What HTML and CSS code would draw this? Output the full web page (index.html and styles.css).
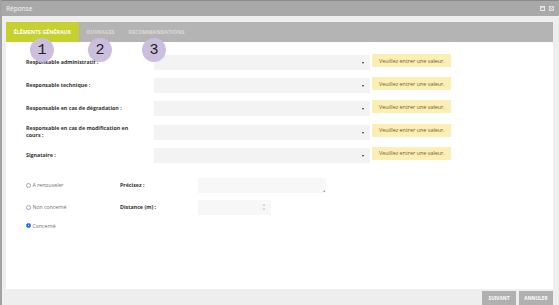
FILE: index.html
```html
<!DOCTYPE html>
<html lang="fr">
<head>
<meta charset="utf-8">
<title>Réponse</title>
<link rel="stylesheet" href="styles.css">
</head>
<body>
<div class="window">
  <div class="titlebar">
    <span class="title">Réponse</span>
    <div class="wbtns">
      <svg width="5" height="5" viewBox="0 0 5 5"><rect x="0.5" y="0.5" width="4" height="4" fill="none" stroke="#e8e8e8" stroke-width="1"/><rect x="0.5" y="0.5" width="4" height="1.2" fill="#e8e8e8"/></svg>
      <svg width="5" height="5" viewBox="0 0 5 5"><rect x="0.5" y="0.5" width="4" height="4" fill="none" stroke="#e8e8e8" stroke-width="0.8"/><path d="M1.2 1.2 L3.8 3.8 M3.8 1.2 L1.2 3.8" stroke="#e8e8e8" stroke-width="0.9"/></svg>
    </div>
  </div>
  <div class="body">
    <div class="tabs">
      <div class="tab active">ÉLÉMENTS GÉNÉRAUX</div>
      <div class="tab">OUVRAGES</div>
      <div class="tab">RECOMMANDATIONS</div>
    </div>
    <div class="panel">
      <div class="fields">
        <label class="lbl">Responsable administratif :</label>
        <div class="select"><span class="caret"></span></div>
        <div class="msg">Veuillez entrer une valeur.</div>

        <label class="lbl">Responsable technique :</label>
        <div class="select"><span class="caret"></span></div>
        <div class="msg">Veuillez entrer une valeur.</div>

        <label class="lbl">Responsable en cas de dégradation :</label>
        <div class="select"><span class="caret"></span></div>
        <div class="msg">Veuillez entrer une valeur.</div>

        <label class="lbl">Responsable en cas de modification en cours :</label>
        <div class="select"><span class="caret"></span></div>
        <div class="msg">Veuillez entrer une valeur.</div>

        <label class="lbl">Signataire :</label>
        <div class="select"><span class="caret"></span></div>
        <div class="msg">Veuillez entrer une valeur.</div>
      </div>

      <div class="radios">
        <label class="radio r1"><input type="radio" name="etat"> A renouveler</label>
        <label class="lbl2 c2">Précisez :</label>
        <div class="textwrap c3"><textarea class="textarea"></textarea><span class="grip"></span></div>

        <label class="radio r2"><input type="radio" name="etat"> Non concerné</label>
        <label class="lbl2 c2">Distance (m) :</label>
        <div class="number c3"><span class="spin"><span>&#708;</span><span>&#709;</span></span></div>

        <label class="radio r3"><input type="radio" name="etat" checked> Concerné</label>
      </div>
    </div>
    <div class="footer">
      <button class="btn">SUIVANT</button>
      <button class="btn">ANNULER</button>
    </div>
    <div class="bubble b1">1</div>
    <div class="bubble b2">2</div>
    <div class="bubble b3">3</div>
  </div>
</div>
</body>
</html>
```

FILE: styles.css
```css
* { box-sizing: border-box; }
html, body { margin: 0; padding: 0; }
body {
  font-family: "Open Sans", "Liberation Sans", sans-serif;
  background: #8c8c8c;
}
.window {
  width: 559px;
  height: 305px;
  display: flex;
  flex-direction: column;
  border-top: 1px solid #8a8a8a;
  border-left: 2px solid #a2a2a2;
  background: #eeeeee;
}
.titlebar {
  height: 15px;
  background: #a9a9a9;
  display: flex;
  align-items: center;
  justify-content: space-between;
  padding: 0 5px 0 4px;
  color: #f4f4f4;
  font-size: 6.5px;
}
.wbtns { display: flex; gap: 4px; }
.wbtns svg { display: block; }
.body {
  flex: 1;
  position: relative;
  display: flex;
  flex-direction: column;
  padding: 6px 6px 0 4px;
  background: #eeeeee;
}
.tabs {
  height: 20px;
  background: #b4b4b4;
  display: flex;
  align-items: stretch;
}
.tab {
  display: flex;
  align-items: center;
  padding: 0 7px;
  font-size: 5.3px;
  font-weight: 700;
  color: #dadada;
}
.tab.active {
  background: #c6d02e;
  color: #ffffff;
  width: 73px;
  justify-content: center;
  padding: 0;
}
.panel {
  height: 247px;
  background: #ffffff;
  padding: 13px 0 0 20px;
}
.fields {
  display: grid;
  grid-template-columns: 128px 218px auto;
  grid-auto-rows: 15px;
  row-gap: 8.2px;
  align-items: center;
}
.lbl {
  font-size: 5.3px;
  font-weight: 700;
  color: #333333;
  max-width: 110px;
  line-height: 7px;
}
.select {
  height: 15px;
  margin-right: 2px;
  background: #f3f3f3;
  display: flex;
  align-items: center;
  justify-content: flex-end;
  padding-right: 6px;
}
.caret {
  width: 0;
  height: 0;
  border-left: 1.5px solid transparent;
  border-right: 1.5px solid transparent;
  border-top: 2px solid #333;
  margin-top: 1px;
}
.msg {
  align-self: start;
  margin-top: -1px;
  width: 79px;
  height: 13px;
  background: #fcefb6;
  color: #6f5e26;
  font-size: 5.4px;
  display: flex;
  align-items: center;
  padding-left: 7px;
}
.radios {
  margin-top: 15px;
  display: grid;
  grid-template-columns: 94px 78px auto;
  grid-template-rows: 15px 15px 10px;
  row-gap: 7px;
  align-items: center;
}
.radio {
  grid-column: 1;
  display: flex;
  align-items: center;
  gap: 1.5px;
  font-size: 5.2px;
  color: #707070;
}
.radio input {
  appearance: none;
  -webkit-appearance: none;
  width: 5px;
  height: 5px;
  margin: 0;
  border-radius: 50%;
  border: 0.6px solid #a8a8a8;
  background: #fff;
}
.radio input:checked {
  border: 0.6px solid #1a6fe0;
  background: radial-gradient(circle, #cfe0ff 0 0.5px, #1a73e8 0.9px);
}
.r3 { margin-top: -2px; }
.lbl2 {
  font-size: 5.3px;
  font-weight: 700;
  color: #333333;
}
.textwrap {
  width: 128px;
  height: 15px;
  position: relative;
}
.textarea {
  width: 100%;
  height: 100%;
  border: 0;
  background: #f7f7f7;
  margin: 0;
  padding: 0;
  resize: none;
  outline: none;
  display: block;
}
.grip {
  position: absolute;
  right: 1px;
  bottom: 1px;
  width: 0;
  height: 0;
  border-left: 2.5px solid transparent;
  border-bottom: 2.5px solid #9a9a9a;
}
.number {
  width: 73px;
  height: 15px;
  background: #f7f7f7;
  display: flex;
  justify-content: flex-end;
  align-items: center;
  padding-right: 6px;
}
.spin {
  display: flex;
  flex-direction: column;
  font-size: 4px;
  line-height: 4px;
  color: #999999;
}
.footer {
  display: flex;
  justify-content: flex-end;
  gap: 3px;
  padding-top: 2px;
}
.btn {
  width: 34px;
  height: 14px;
  border: 0;
  margin: 0;
  padding: 0;
  background: #b0b0b0;
  color: #ffffff;
  font-family: "Open Sans", "Liberation Sans", sans-serif;
  font-size: 4.8px;
  font-weight: 700;
}
.bubble {
  position: absolute;
  width: 24px;
  height: 24px;
  border-radius: 50%;
  background: #cbbfdd;
  color: #222222;
  font-family: "Liberation Mono", "DejaVu Sans Mono", monospace;
  font-size: 15px;
  display: flex;
  align-items: center;
  justify-content: center;
  top: 22px;
  z-index: 2;
}
.b1 { left: 28px; }
.b2 { left: 86px; }
.b3 { left: 140px; }
```
